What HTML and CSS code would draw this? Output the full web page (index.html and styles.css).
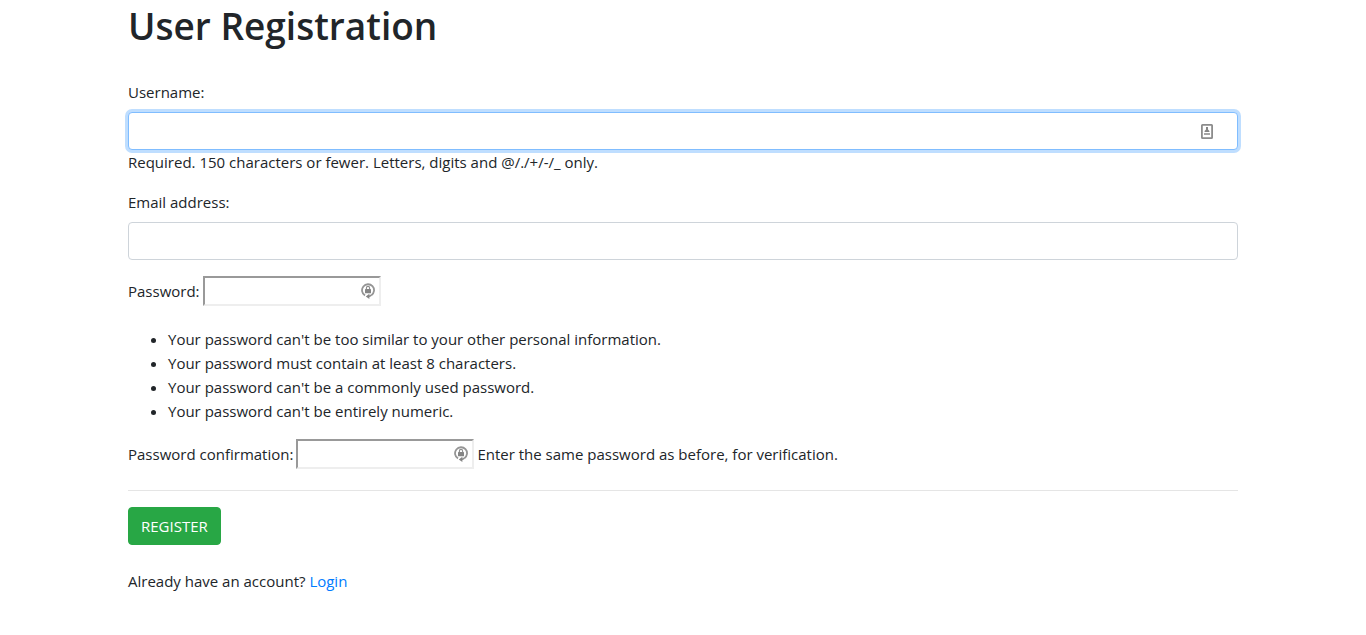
FILE: index.html
```html
<!DOCTYPE html>
<html lang="en">
<head>
<meta charset="utf-8">
<meta name="viewport" content="width=device-width, initial-scale=1">
<title>User Registration</title>
<link rel="stylesheet" href="styles.css">
</head>
<body>
<svg class="sprite" aria-hidden="true">
  <symbol id="lock" viewBox="0 0 14 18">
    <path d="M4 13.4A6 6 0 1 1 10.4 13.2" fill="none" stroke="#959595" stroke-width="1.8"/>
    <path d="M10.4 13.2Q9 14.4 7.5 14.4" fill="none" stroke="#8c8c8c" stroke-width="1.6"/>
    <path d="M8.4 11.8v5.2L4.8 14.4z" fill="#858585"/>
    <path d="M5.4 7.6V6a1.6 1.6 0 0 1 3.2 0v1.6" fill="none" stroke="#8c8c8c" stroke-width="1.1"/>
    <rect x="4" y="7" width="6" height="4.2" rx="0.5" fill="#858585"/>
  </symbol>
</svg>
<main class="container">
  <h1 class="title">User Registration</h1>
  <form class="form">
    <div class="group">
      <label class="label" for="username">Username:</label>
      <div class="field">
        <input class="control focused" id="username" type="text" maxlength="150">
        <svg class="card-icon" viewBox="0 0 12 15" aria-hidden="true">
          <rect x="0.9" y="0.9" width="10.2" height="13.2" rx="0.6" fill="#fff" stroke="#8c8c8c" stroke-width="1.8"/>
          <path d="M5 3h2v2.4l1.4 1.6v1H3.6V7L5 5.4z" fill="#858585"/>
          <path d="M3 9h6v2H3z" fill="#a6a6a6"/>
        </svg>
      </div>
      <span class="help">Required. 150 characters or fewer. Letters, digits and @/./+/-/_ only.</span>
    </div>
    <div class="group">
      <label class="label" for="email">Email address:</label>
      <input class="control" id="email" type="email">
    </div>
    <div class="row password-row">
      <label for="password1">Password:</label>
      <div class="field">
        <input class="plain" id="password1" type="password">
        <svg class="lock-icon" aria-hidden="true"><use href="#lock"/></svg>
      </div>
    </div>
    <ul class="rules">
      <li>Your password can't be too similar to your other personal information.</li>
      <li>Your password must contain at least 8 characters.</li>
      <li>Your password can't be a commonly used password.</li>
      <li>Your password can't be entirely numeric.</li>
    </ul>
    <div class="row">
      <label for="password2">Password confirmation:</label>
      <div class="field">
        <input class="plain" id="password2" type="password">
        <svg class="lock-icon" aria-hidden="true"><use href="#lock"/></svg>
      </div>
      <span>Enter the same password as before, for verification.</span>
    </div>
    <hr class="rule">
    <button class="button" type="submit">REGISTER</button>
  </form>
  <p class="login">Already have an account? <a class="link" href="#">Login</a></p>
</main>
</body>
</html>
```
FILE: styles.css
```css
*,
*::before,
*::after {
  box-sizing: border-box;
}

body {
  margin: 0;
  background: #fff;
  color: #212529;
  font-family: "Segoe UI", "Open Sans", "Noto Sans", sans-serif;
  font-size: 15px;
  line-height: 24px;
}

.sprite {
  position: absolute;
  width: 0;
  height: 0;
}

.container {
  max-width: 1140px;
  margin: 0 auto;
  padding: 2px 15px 24px;
}

.title {
  margin: 0 0 30px;
  font-size: 37px;
  font-weight: 600;
  line-height: 48px;
}

.group {
  margin-bottom: 16px;
}

.label {
  display: block;
  margin-bottom: 8px;
}

.field {
  position: relative;
}

.control {
  display: block;
  width: 100%;
  height: 38px;
  padding: 6px 12px;
  border: 1px solid #ced4da;
  border-radius: 4px;
  background: #fff;
  color: #495057;
  font: inherit;
  outline: none;
}

.focused,
.control:focus {
  border-color: #80bdff;
  box-shadow: 0 0 0 3px #bfdeff;
}

.card-icon {
  position: absolute;
  top: 12px;
  right: 25px;
  width: 12px;
  height: 15px;
}

.help {
  display: block;
}

.row {
  display: flex;
  flex-wrap: wrap;
  align-items: center;
  column-gap: 3px;
}

.password-row {
  margin-bottom: 21px;
}

.plain {
  display: block;
  width: 178px;
  height: 30px;
  padding: 1px 24px 1px 2px;
  border: 2px solid;
  border-color: #999 #eee #eee #999;
  border-radius: 0;
  background: #fff;
  font: inherit;
}

.lock-icon {
  position: absolute;
  top: 6px;
  right: 6px;
  width: 14px;
  height: 18px;
}

.rules {
  margin: 0 0 16px;
  padding-left: 40px;
}

.rule {
  margin: 21px 0 16px;
  border: 0;
  border-top: 1px solid #e5e5e5;
}

.button {
  display: block;
  height: 38px;
  padding: 6px 12px;
  border: 1px solid #28a745;
  border-radius: 4px;
  background: #28a745;
  color: #fff;
  font: inherit;
  cursor: pointer;
}

.login {
  margin: 24px 0 0;
}

.link {
  color: #007bff;
  text-decoration: none;
}
```
